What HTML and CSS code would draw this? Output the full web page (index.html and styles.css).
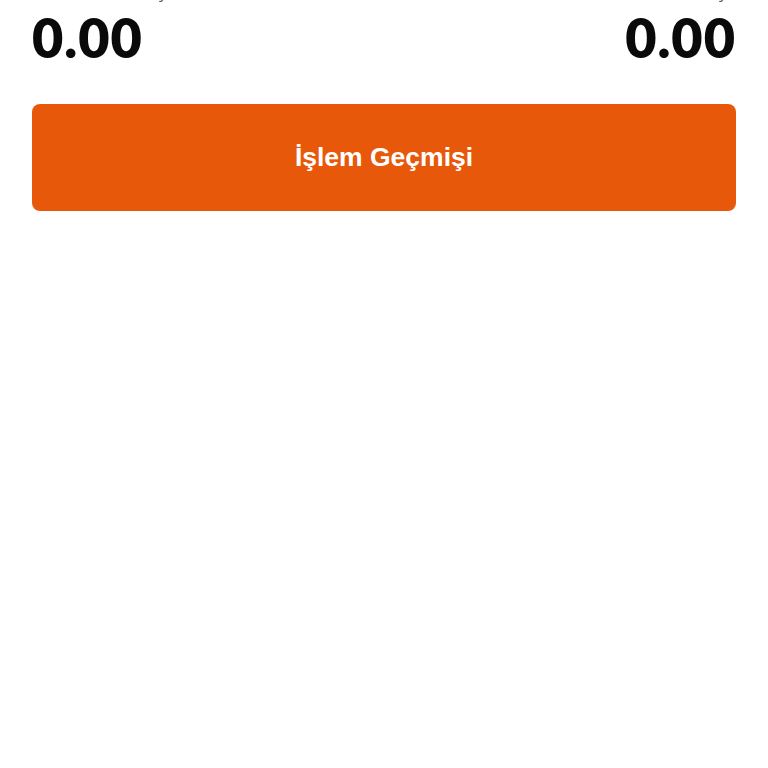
FILE: index.html
```html
<!DOCTYPE html>
<html lang="tr">
<head>
<meta charset="utf-8">
<link rel="stylesheet" href="styles.css">
</head>
<body>
<main class="page">
  <section class="stats">
    <div class="stat">
      <div class="stat-label">Kullanılabilir bakiye</div>
      <div class="stat-value">0.00</div>
    </div>
    <div class="stat stat-right">
      <div class="stat-label">Mevcut bakiye</div>
      <div class="stat-value">0.00</div>
    </div>
  </section>
  <button class="history-btn">İşlem Geçmişi</button>
</main>
</body>
</html>
```

FILE: styles.css
```css
html, body {
  margin: 0;
  padding: 0;
  background: #ffffff;
}
.page {
  padding: 0 32px;
  margin-top: -18px;
  font-family: "Lato", "Open Sans", sans-serif;
}
.stats {
  display: flex;
  justify-content: space-between;
}
.stat {
  display: flex;
  flex-direction: column;
}
.stat-right {
  align-items: flex-end;
}
.stat-label {
  font-family: "Open Sans", sans-serif;
  font-size: 16px;
  line-height: 20px;
  color: #555555;
}
.stat-value {
  font-family: "Lato", sans-serif;
  font-weight: 800;
  font-size: 54px;
  line-height: 64px;
  letter-spacing: 1px;
  padding-top: 4px;
  color: #0a0a0a;
}
.history-btn {
  display: flex;
  align-items: center;
  justify-content: center;
  width: 100%;
  height: 107px;
  margin-top: 34px;
  border: none;
  border-radius: 8px;
  background: #e8580a;
  color: #ffffff;
  font-family: "Liberation Sans", Arial, sans-serif;
  font-weight: 700;
  font-size: 26.5px;
}
```
